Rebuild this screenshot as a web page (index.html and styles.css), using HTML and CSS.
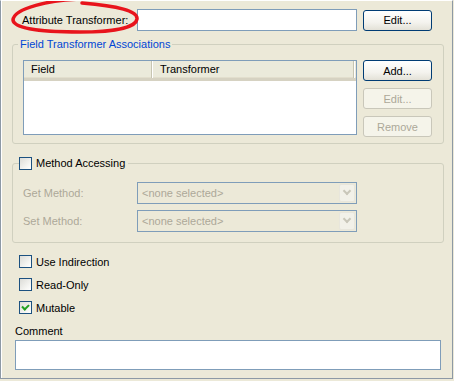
FILE: index.html
```html
<!DOCTYPE html>
<html lang="en">
<head>
    <meta charset="UTF-8">
    <title>Attribute Transformer</title>
    <link rel="stylesheet" href="styles.css">
</head>
<body>
    <div class="panel">
        <div class="top-row">
            <span class="top-label">Attribute Transformer:</span>
            <div class="text-field"></div>
            <button class="btn">Edit...</button>
        </div>

        <fieldset class="group assoc">
            <legend class="group-title">Field Transformer Associations</legend>
            <div class="assoc-body">
                <div class="table">
                    <div class="thead">
                        <div class="th col-field">Field</div>
                        <div class="th col-trans">Transformer</div>
                        <div class="th col-rest"></div>
                    </div>
                    <div class="tbody"></div>
                </div>
                <div class="btn-col">
                    <button class="btn">Add...</button>
                    <button class="btn" disabled>Edit...</button>
                    <button class="btn" disabled>Remove</button>
                </div>
            </div>
        </fieldset>

        <fieldset class="group method">
            <legend class="check-legend"><span class="check"></span>Method Accessing</legend>
            <div class="form-row">
                <span class="form-label">Get Method:</span>
                <div class="combo"><span class="combo-text">&lt;none selected&gt;</span><span class="combo-arrow"></span></div>
            </div>
            <div class="form-row">
                <span class="form-label">Set Method:</span>
                <div class="combo"><span class="combo-text">&lt;none selected&gt;</span><span class="combo-arrow"></span></div>
            </div>
        </fieldset>

        <div class="options">
            <div class="option"><span class="check"></span>Use Indirection</div>
            <div class="option"><span class="check"></span>Read-Only</div>
            <div class="option"><span class="check checked"></span>Mutable</div>
        </div>

        <div class="comment">
            <div class="comment-label">Comment</div>
            <div class="comment-box"></div>
        </div>

        <!-- hand drawn highlight round the label -->
        <svg class="marker" width="150" height="40" viewBox="0 0 150 40">
            <path d="M 82 -1 C 50 0, 14 8, 13 20 C 14 30, 50 32, 80 32 C 112 32, 136 28, 137 19 C 138 11, 118 6, 82 3"
                  fill="none" stroke="#e8141c" stroke-width="3.5" stroke-linecap="round"/>
        </svg>
    </div>
</body>
</html>
```

FILE: styles.css
```css
body {
    margin: 0;
    background: #ece9d8;
    font-family: "Liberation Sans", Arial, sans-serif;
    font-size: 11px;
    color: #000;
}

.panel {
    position: relative;
    box-sizing: border-box;
    width: 453px;
    height: 379px;
    padding: 9px 8px 0 11px;
    border-left: 1px solid #8d99a5;
    border-right: 1px solid #8d99a5;
    border-bottom: 1px solid #8d99a5;
    border-top: 1px solid #fff;
    background: #ece9d8;
    box-shadow: inset 1px 0 #fff;
    overflow: hidden;
}

.top-row {
    display: flex;
    align-items: center;
    height: 22px;
    margin-top: -1px;
}

.top-label {
    width: 115px;
    padding-left: 10px;
}

.text-field {
    box-sizing: border-box;
    width: 220px;
    height: 22px;
    border: 1px solid #7f9db9;
    background: #fff;
}

.btn {
    box-sizing: border-box;
    width: 69px;
    height: 21px;
    padding: 0;
    margin-left: 6px;
    border: 1px solid #003c74;
    border-radius: 3px;
    background: linear-gradient(#ffffff, #f4f3ee 60%, #e3e1d7);
    font-family: "Liberation Sans", Arial, sans-serif;
    font-size: 11px;
    color: #000;
}

.btn:disabled {
    border-color: #c9c7ba;
    background: #f5f4ea;
    color: #aca899;
}

.group {
    margin: 0;
    border: 1px solid #d0d0bf;
    border-radius: 3px;
    min-width: 0;
}

.assoc {
    margin-top: 7px;
    padding: 9px 11px 6px 10px;
}

.group-title {
    margin-left: -5px;
    padding: 0 2px;
    line-height: 13px;
    color: #0046d5;
}

.assoc-body {
    display: flex;
    align-items: flex-start;
}

.table {
    box-sizing: border-box;
    width: 334px;
    height: 75px;
    border: 1px solid #7f9db9;
    background: #fff;
}

.thead {
    display: flex;
    height: 17px;
    background: #ebeadb;
    border-bottom: 3px solid #d6d2c2;
    box-shadow: 0 -1px #e2decd inset;
}

.th {
    box-sizing: border-box;
    line-height: 17px;
    border-right: 1px solid #c7c5b2;
    box-shadow: 1px 0 #fff;
}

.col-field {
    width: 128px;
    padding-left: 7px;
}

.col-trans {
    width: 202px;
    padding-left: 8px;
}

.col-rest {
    flex: 1;
    border-right: none;
    box-shadow: none;
}

.btn-col {
    display: flex;
    flex-direction: column;
    gap: 7px;
}

.method {
    margin-top: 13px;
    padding: 12px 10px 10px 10px;
}

.check-legend {
    display: flex;
    align-items: center;
    margin-left: -4px;
    padding: 0 3px 0 0;
    line-height: 13px;
}

.check {
    box-sizing: border-box;
    display: inline-block;
    position: relative;
    width: 13px;
    height: 13px;
    margin-right: 4px;
    border: 1px solid #1c5180;
    background: linear-gradient(135deg, #dcdcd7, #f6f6f3 70%, #ffffff);
}

.check.checked::after {
    content: "";
    position: absolute;
    left: 2px;
    top: 1px;
    width: 5px;
    height: 3px;
    border-left: 2px solid #21a121;
    border-bottom: 2px solid #21a121;
    transform: translate(0, 1px) rotate(-45deg);
}

.form-row {
    display: flex;
    align-items: center;
    margin-bottom: 6px;
}

.form-row:last-child {
    margin-bottom: 0;
}

.form-label {
    width: 114px;
    color: #aca899;
}

.combo {
    box-sizing: border-box;
    display: flex;
    align-items: center;
    width: 220px;
    height: 22px;
    padding: 1px;
    border: 1px solid #7f9db9;
}

.combo-text {
    flex: 1;
    padding-left: 3px;
    color: #aca899;
}

.combo-arrow {
    position: relative;
    box-sizing: border-box;
    width: 16px;
    height: 18px;
    border: 1px solid #e8e6dc;
    border-radius: 2px;
    background: #f2f1e9;
}

.combo-arrow::after {
    content: "";
    position: absolute;
    left: 4px;
    top: 3px;
    width: 4px;
    height: 4px;
    border-right: 2px solid #c9c7ba;
    border-bottom: 2px solid #c9c7ba;
    transform: rotate(45deg);
}

.options {
    display: flex;
    flex-direction: column;
    gap: 10px;
    margin-top: 12px;
    padding-left: 7px;
}

.option {
    display: flex;
    align-items: center;
    height: 13px;
}

.comment {
    margin-top: 11px;
    padding-left: 3px;
}

.comment-label {
    line-height: 13px;
    margin-bottom: 2px;
}

.comment-box {
    box-sizing: border-box;
    width: 426px;
    height: 30px;
    border: 1px solid #7f9db9;
    background: #fff;
}

.marker {
    position: absolute;
    left: -1px;
    top: -1px;
}
```
